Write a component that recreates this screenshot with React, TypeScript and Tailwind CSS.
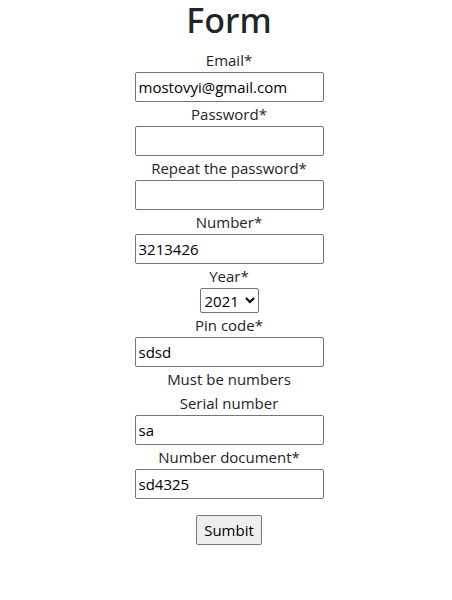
import { useState } from "react";

const inputClass =
  "block h-[30px] w-[189px] rounded-xs border border-[#767676] bg-white px-[3px] text-[15px] text-black";
const labelClass = "block h-6 leading-6";

type FieldProps = {
  id: string;
  label: string;
  type?: string;
  initial?: string;
  error?: string;
};

function Field({ id, label, type = "text", initial = "", error }: FieldProps) {
  const [value, setValue] = useState(initial);
  return (
    <div className="flex flex-col items-center">
      <label htmlFor={id} className={labelClass}>
        {label}
      </label>
      <input
        id={id}
        type={type}
        value={value}
        onChange={(e) => setValue(e.target.value)}
        className={inputClass}
      />
      {error && <p className="leading-6">{error}</p>}
    </div>
  );
}

export default function App() {
  return (
    <main className="min-h-screen bg-white pl-1.5 font-['Open_Sans','Noto_Sans',sans-serif] text-[15px] text-[#212529]">
      <form
        className="flex flex-col items-center"
        onSubmit={(e) => e.preventDefault()}
      >
        <h1 className="mb-2 font-['Noto_Sans','Open_Sans',sans-serif] text-[34px] leading-10 font-medium">
          Form
        </h1>
        <Field id="email" label="Email*" initial="mostovyi@gmail.com" />
        <Field id="password" label="Password*" type="password" />
        <Field id="repeat" label="Repeat the password*" type="password" />
        <Field id="number" label="Number*" initial="3213426" />
        <label htmlFor="year" className={labelClass}>
          Year*
        </label>
        <select
          id="year"
          defaultValue="2021"
          className="h-[25px] w-[59px] rounded-xs border border-[#767676] bg-white text-[15px] text-black"
        >
          <option>2021</option>
          <option>2020</option>
          <option>2019</option>
        </select>
        <Field id="pin" label="Pin code*" initial="sdsd" error="Must be numbers" />
        <Field id="serial" label="Serial number" initial="sa" />
        <Field id="document" label="Number document*" initial="sd4325" />
        <button
          type="submit"
          className="mt-4 h-[30px] w-[66px] rounded-xs border border-[#767676] bg-[#efefef] text-[15px] text-black"
        >
          Sumbit
        </button>
      </form>
    </main>
  );
}
